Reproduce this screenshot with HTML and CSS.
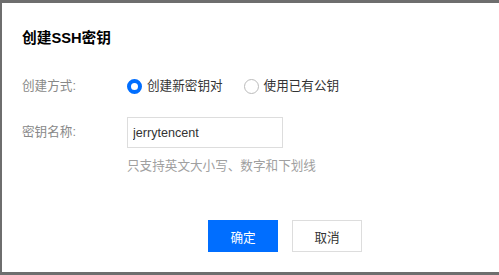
FILE: index.html
```html
<!DOCTYPE html>
<html lang="zh-CN">
<head>
  <meta charset="UTF-8">
  <title>创建SSH密钥</title>
  <link rel="stylesheet" href="styles.css">
</head>
<body>
  <div class="dialog">
    <h2 class="dialog-title">创建SSH密钥</h2>

    <!-- 创建方式 -->
    <div class="form-row">
      <div class="form-label">创建方式:</div>
      <div class="form-field radios">
        <label class="radio checked"><span class="radio-dot"></span>创建新密钥对</label>
        <label class="radio"><span class="radio-dot"></span>使用已有公钥</label>
      </div>
    </div>

    <!-- 密钥名称 -->
    <div class="form-row name-row">
      <div class="form-label">密钥名称:</div>
      <div class="form-field">
        <input class="text-input" type="text" value="jerrytencent">
        <p class="hint">只支持英文大小写、数字和下划线</p>
      </div>
    </div>

    <div class="actions">
      <button class="btn btn-primary">确定</button>
      <button class="btn">取消</button>
    </div>
  </div>
</body>
</html>
```

FILE: styles.css
```css
body {
  margin: 0;
  background: #fff;
  font-family: "Liberation Sans", "Noto Sans CJK SC", sans-serif;
  font-size: 12.6px;
  color: #333;
  overflow: hidden;
}
/* dialog sits inside a dark frame: top, left and bottom edges show */
.dialog {
  height: 275px;
  background: #fff;
  border-top: 3px solid #6e6e6e;
  border-left: 2px solid #6e6e6e;
  border-bottom: 3px solid #6e6e6e;
  padding: 25px 20px 0;
  box-sizing: border-box;
}
.dialog-title {
  margin: 0;
  font-size: 14.7px;
  line-height: 20px;
  font-weight: bold;
  color: #000;
}
/* form rows */
.form-row {
  display: flex;
  margin-top: 28px;
}
.form-label {
  width: 105px;
  flex-shrink: 0;
  color: #888;
  line-height: 20px;
}
.form-field {
  flex: 1;
}
.radios {
  display: flex;
  gap: 21px;
}
.radio {
  display: flex;
  align-items: center;
  line-height: 20px;
  color: #333;
}
.radio-dot {
  width: 15px;
  height: 15px;
  border: 1px solid #bbb;
  border-radius: 50%;
  box-sizing: border-box;
  margin-right: 5px;
  background: #fff;
}
.radio.checked .radio-dot {
  border: 4px solid #006eff;
}
.name-row {
  margin-top: 21px;
}
.name-row .form-label {
  padding-top: 5px;
}
.text-input {
  display: block;
  width: 156px;
  height: 31px;
  box-sizing: border-box;
  border: 1px solid #ddd;
  padding: 0 5px;
  margin: 0;
  font: inherit;
  color: #333;
  outline: none;
}
.hint {
  margin: 9px 0 0;
  line-height: 18px;
  color: #a0a0a0;
}
/* buttons */
.actions {
  display: flex;
  gap: 14px;
  margin: 45px 0 0 186px;
}
.btn {
  width: 70px;
  height: 32px;
  border: 1px solid #ddd;
  background: #fff;
  color: #333;
  font: inherit;
  cursor: pointer;
}
.btn-primary {
  background: #006eff;
  border-color: #006eff;
  color: #fff;
}
```
